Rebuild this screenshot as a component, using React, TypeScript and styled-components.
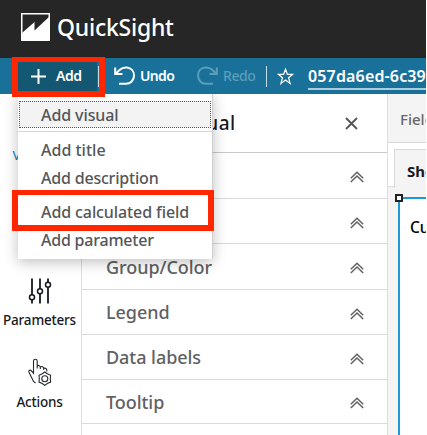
import React from "react";
import styled, { createGlobalStyle } from "styled-components";

const Global = createGlobalStyle`
  * { box-sizing: border-box; }
  body { margin: 0; background: #fff; overflow: hidden; }
`;

const Text = styled.span<{ $size: number; $spacing?: number; $weight?: number; $color?: string }>`
  font-size: ${(p) => p.$size}px;
  letter-spacing: ${(p) => p.$spacing ?? 0}px;
  font-weight: ${(p) => p.$weight ?? 500};
  color: ${(p) => p.$color ?? "inherit"};
  line-height: 20px;
  white-space: nowrap;
`;

const Window = styled.div`
  position: relative;
  width: 426px;
  height: 435px;
  overflow: hidden;
  display: flex;
  flex-direction: column;
  font-family: "Noto Sans", "Open Sans", sans-serif;
  color: #16191f;
`;

const Header = styled.header`
  height: 58px;
  flex: none;
  display: flex;
  gap: 7px;
  padding: 13px 0 0 21px;
  background: #262626;
  color: #fff;
  svg { flex: none; }
`;

const Brand = styled(Text)`
  line-height: 29px;
`;

const Toolbar = styled.nav`
  height: 36px;
  flex: none;
  display: flex;
  align-items: center;
  padding-left: 18px;
  background: #19719a;
  color: #fff;
  svg { flex: none; }
`;

const AddButton = styled.div`
  width: 79px;
  height: 30px;
  display: flex;
  align-items: center;
  gap: 10px;
  padding-left: 13px;
  background: #145773;
`;

const Tool = styled.div<{ $left: number; $width: number; $faded?: boolean }>`
  display: flex;
  align-items: center;
  gap: 5px;
  flex: none;
  width: ${(p) => p.$width}px;
  margin-left: ${(p) => p.$left}px;
  color: ${(p) => (p.$faded ? "#5b9dbb" : "#fff")};
`;

const Separator = styled.div<{ $left?: number }>`
  width: 1px;
  height: 21px;
  flex: none;
  margin-left: ${(p) => p.$left ?? 0}px;
  background: #c5dce6;
`;

const TitleField = styled.div`
  height: 26px;
  margin: 1px 0 0 14px;
  padding-top: 1px;
  flex: 1;
  min-width: 0;
  overflow: hidden;
  border-bottom: 2px solid #a9cddd;
`;

const Body = styled.div`
  flex: 1;
  display: flex;
  min-height: 0;
`;

const Sidebar = styled.aside`
  width: 82px;
  flex: none;
  display: flex;
  flex-direction: column;
  border-right: 1px solid #dedede;
`;

const SideTab = styled.div<{ $height: number; $active?: boolean }>`
  height: ${(p) => p.$height}px;
  flex: none;
  display: flex;
  flex-direction: column;
  align-items: center;
  justify-content: flex-end;
  gap: 6px;
  padding-right: 2px;
  color: ${(p) => (p.$active ? "#1b8fc6" : "#16191f")};
`;

const Panel = styled.section`
  width: 305px;
  flex: none;
`;

const PanelHeader = styled.div`
  height: 59px;
  display: flex;
  align-items: center;
  justify-content: space-between;
  padding: 0 29px 0 23px;
  border-bottom: 1px solid #c8c8c8;
`;

const PanelRow = styled.div<{ $height: number }>`
  height: ${(p) => p.$height}px;
  display: flex;
  align-items: center;
  justify-content: space-between;
  padding: 0 23px 0 24px;
  border-bottom: 1px solid #dadada;
  color: #5f6163;
  svg { margin-top: 3px; }
`;

const Workspace = styled.main`
  flex: 1;
  min-width: 0;
  display: flex;
  flex-direction: column;
  border-left: 1px solid #dedede;
  background: #f4f4f4;
  overflow: hidden;
`;

const FieldWells = styled.div`
  height: 49px;
  flex: none;
  padding: 14px 0 0 12px;
  border-bottom: 1px solid #d5d5d5;
`;

const Sheets = styled.div`
  height: 44px;
  flex: none;
  padding: 6px 0 0 6px;
  background: #fff;
  border-bottom: 1px solid #dedede;
`;

const SheetTab = styled.div`
  height: 39px;
  margin-bottom: -1px;
  padding: 10px 0 0 12px;
  background: #f4f4f4;
  border: 1px solid #d8d8d8;
  border-width: 1px 0 0 1px;
  overflow: hidden;
`;

const Visual = styled.div`
  position: relative;
  flex: 1;
  width: 60px;
  margin: 10px 0 -4px 10px;
  padding: 17px 0 0 10px;
  border: 2px solid #1c9ad6;
  background: #fff;
`;

const Handle = styled.i`
  position: absolute;
  left: -5px;
  top: -5px;
  width: 8px;
  height: 8px;
  border: 2px solid #222;
  background: #fff;
`;

const Menu = styled.div`
  position: absolute;
  left: 18px;
  top: 94px;
  width: 195px;
  height: 165px;
  padding-top: 7px;
  background: #fff;
  border-right: 1px solid #cfcfcf;
  box-shadow: 0 3px 13px rgba(0, 0, 0, 0.26);
  clip-path: inset(0 -20px -25px -20px);
  color: #545658;
`;

const MenuItem = styled.div<{ $focused?: boolean }>`
  height: 28px;
  display: flex;
  align-items: center;
  padding-left: 23px;
  ${(p) =>
    p.$focused &&
    `height: 27px; margin: 0 1px; padding-left: 21px; background: #f3f3f3; border: 1px dotted #555;`}
`;

const MenuRule = styled.div<{ $top: number; $bottom: number }>`
  height: 1px;
  margin: ${(p) => p.$top}px 0 ${(p) => p.$bottom}px;
  background: #d5d5d5;
`;

const Highlight = styled.div<{ $x: number; $y: number; $w: number; $h: number }>`
  position: absolute;
  left: ${(p) => p.$x}px;
  top: ${(p) => p.$y}px;
  width: ${(p) => p.$w}px;
  height: ${(p) => p.$h}px;
  border: solid #ff2600;
  border-width: 5px 6px 6px;
`;

const Logo = () => (
  <svg width="29" height="28" viewBox="0 0 29 28">
    <rect x=".75" y=".75" width="27.5" height="26.5" fill="none" stroke="#fff" strokeWidth="1.5" />
    <path d="M1 20 13.5 9V17.5L28 4V27H1Z" fill="#fff" />
  </svg>
);

const TurnArrow = ({ flip }: { flip?: boolean }) => (
  <svg width="21" height="20" viewBox="0 0 21 20" fill="none" stroke="currentColor" strokeWidth="2">
    <g transform={flip ? "translate(21 0) scale(-1 1)" : undefined}>
      <path d="M1.2 1.5V8H8.5" />
      <path d="M1.8 7.5 5.5 4C8 1.7 11 1.4 13 1.6C17.3 2.1 20 5.5 20 9.5C20 14.5 16.5 17.8 12 17.8H5" />
    </g>
  </svg>
);

const Star = () => (
  <svg width="17" height="17" viewBox="0 0 17 17" fill="none" stroke="#fff" strokeWidth="1.2">
    <path d="M8.5 1.2 10.4 6.3H15.8L11.5 9.7 13.1 15.4 8.5 12.1 3.9 15.4 5.5 9.7 1.2 6.3H6.6Z" />
  </svg>
);

const Chevrons = () => (
  <svg width="14" height="12" viewBox="0 0 14 12" fill="none" stroke="#606264" strokeWidth="1.5">
    <path d="M.8 7.2 7 1.3 13.2 7.2M.8 11 7 5 13.2 11" />
  </svg>
);

const Sliders = () => (
  <svg width="24" height="26" viewBox="0 0 24 26" fill="none" stroke="#16191f" strokeWidth="1.8">
    <path d="M4 .5V17M4 22V25.5M12 .5V11M12 16V25.5M20 .5V4M20 9V25.5" />
    <g strokeWidth="1.5">
      <circle cx="4" cy="19.3" r="2.5" />
      <circle cx="12" cy="13.2" r="2.5" />
      <circle cx="20" cy="6.8" r="2.5" />
    </g>
  </svg>
);

const HandGear = () => (
  <svg width="24" height="28" viewBox="0 0 24 28" fill="none" stroke="#25282d" strokeWidth="1.1">
    <path d="M7.5 25 5.5 23.5 1 14.2C.4 12.5 2.2 11.4 3.4 12.8L5.5 15.2V3C5.5.6 9.2.6 9.2 3V10.5M9.2 8C10.5 6.8 12.3 7.7 12.3 9.5V11M12.3 9C14 7.8 15.7 9 15.7 10.5V12M15.7 10.3C18 9.5 19 11 18.8 13.5" />
    <path d="M16.8 14 19.3 15.8 22.6 17.3 22.3 20.7 22.6 24.1 19.3 25.6 16.8 27.4 14.3 25.6 11 24.1 11.3 20.7 11 17.3 14.3 15.8Z" />
    <circle cx="16.8" cy="20.7" r="3" />
  </svg>
);

const rows = [
  { name: "X axis", height: 46 },
  { name: "Value", height: 45 },
  { name: "Group/Color", height: 46 },
  { name: "Legend", height: 45 },
  { name: "Data labels", height: 45 },
  { name: "Tooltip", height: 44 },
];

export default function App() {
  return (
    <>
      <Global />
      <Window>
        <Header>
          <Logo />
          <Brand $size={23} $spacing={-0.25}>QuickSight</Brand>
        </Header>
        <Toolbar>
          <AddButton>
            <svg width="15" height="15" viewBox="0 0 15 15" stroke="#fff" strokeWidth="2">
              <path d="M7.5 0V15M0 7.5H15" />
            </svg>
            <Text $size={14} $weight={600} $spacing={-0.4}>Add</Text>
          </AddButton>
          <Separator $left={1} />
          <Tool $left={15} $width={83}>
            <TurnArrow />
            <Text $size={14} $weight={600} $spacing={-0.65}>Undo</Text>
          </Tool>
          <Tool $left={0} $width={69} $faded>
            <TurnArrow flip />
            <Text $size={14} $spacing={-0.4}>Redo</Text>
          </Tool>
          <Separator />
          <Tool $left={10} $width={17}><Star /></Tool>
          <TitleField><Text $size={16} $weight={600} $spacing={0.15}>057da6ed-6c39</Text></TitleField>
        </Toolbar>
        <Body>
          <Sidebar>
            <SideTab $height={71} $active><Text $size={13}>Visualize</Text></SideTab>
            <SideTab $height={165}>
              <Sliders />
              <Text $size={13.5} $spacing={-0.2}>Parameters</Text>
            </SideTab>
            <SideTab $height={82}>
              <HandGear />
              <Text $size={13.5} $spacing={-0.2}>Actions</Text>
            </SideTab>
          </Sidebar>
          <Panel>
            <PanelHeader>
              <Text $size={19} $spacing={0.6}>Format visual</Text>
              <svg width="13" height="13" viewBox="0 0 13 13" stroke="#55585b" strokeWidth="1.9">
                <path d="M1 1 12 12M12 1 1 12" />
              </svg>
            </PanelHeader>
            {rows.map((row) => (
              <PanelRow key={row.name} $height={row.height}>
                <Text $size={18} $spacing={-0.05}>{row.name}</Text>
                <Chevrons />
              </PanelRow>
            ))}
          </Panel>
          <Workspace>
            <FieldWells><Text $size={15} $color="#66686a">Field wells</Text></FieldWells>
            <Sheets>
              <SheetTab><Text $size={15} $weight={700}>Sheet 1</Text></SheetTab>
            </Sheets>
            <Visual>
              <Handle />
              <Text $size={15.5} $color="#000">Current</Text>
            </Visual>
          </Workspace>
        </Body>
        <Menu>
          <MenuItem $focused><Text $size={16} $spacing={-0.1}>Add visual</Text></MenuItem>
          <MenuRule $top={3} $bottom={4} />
          <MenuItem><Text $size={16}>Add title</Text></MenuItem>
          <MenuItem><Text $size={16} $spacing={-0.2}>Add description</Text></MenuItem>
          <MenuRule $top={2} $bottom={3} />
          <MenuItem><Text $size={16} $spacing={-0.1}>Add calculated field</Text></MenuItem>
          <MenuItem><Text $size={16} $spacing={-0.22}>Add parameter</Text></MenuItem>
        </Menu>
        <Highlight $x={12} $y={57} $w={93} $h={40} />
        <Highlight $x={12} $y={190} $w={202} $h={41} />
      </Window>
    </>
  );
}
